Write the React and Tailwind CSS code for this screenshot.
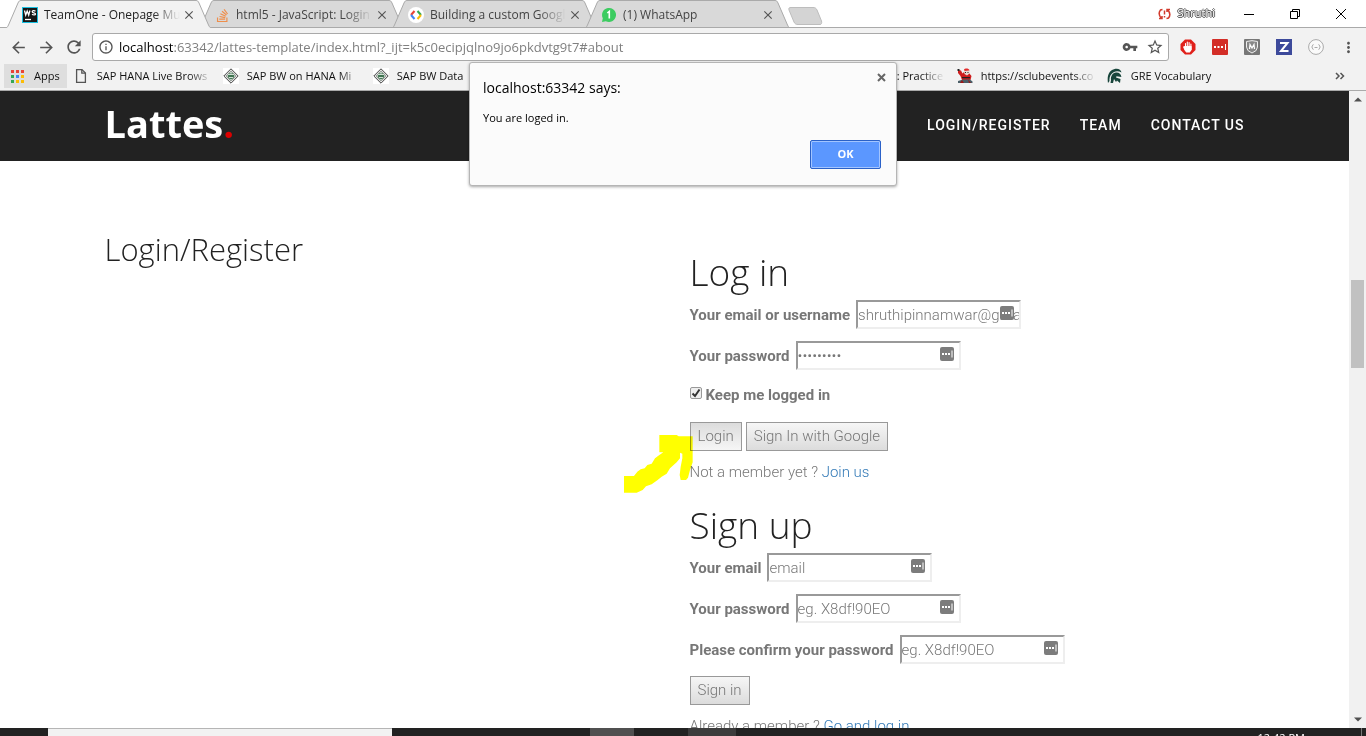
import React from "react";
import {
  MdArrowBack, MdArrowForward, MdRefresh, MdInfoOutline, MdVpnKey,
  MdStarBorder, MdMoreVert, MdClose,
} from "react-icons/md";
import { FaStackOverflow } from "react-icons/fa";

const UI = "font-['Open_Sans','Noto_Sans',sans-serif]";

function WebStormIcon() {
  return (
    <svg width="16" height="16" viewBox="0 0 16 16" aria-hidden="true">
      <rect width="16" height="16" fill="#19bfe0" />
      <rect x="1" y="1" width="14" height="14" fill="#161616" />
      <path d="M2.500 3.500l1.200 4.500 1.500-4 1.500 4 1.200-4.500M13.500 4.200c-1.200-.9-3.300-.7-3.300.6 0 1.300 3.300.7 3.300 2.100 0 1.300-2.300 1.300-3.500.4" fill="none" stroke="#fff" strokeWidth="1.300" />
      <path d="M3 12.500h6" stroke="#fff" strokeWidth="1.300" />
    </svg>
  );
}

function DevelopersIcon() {
  return (
    <svg width="16" height="16" viewBox="0 0 16 16" fill="none" strokeWidth="2" aria-hidden="true">
      <circle cx="8" cy="8" r="8" fill="#fff" />
      <path d="M6.500 4L3 8" stroke="#ea4335" />
      <path d="M3 8l3.500 4" stroke="#4285f4" />
      <path d="M9.500 4L13 8" stroke="#34a853" />
      <path d="M13 8l-3.500 4" stroke="#fbbc05" />
    </svg>
  );
}

function WhatsAppIcon() {
  return (
    <svg width="16" height="16" viewBox="0 0 16 16" aria-hidden="true">
      <path d="M1 15l.8-3.800A7 7 0 1 1 4.800 14.200z" fill="#3dcc61" />
      <path d="M6.300 6l2-1.600V11.500" fill="none" stroke="#fff" strokeWidth="1.600" />
    </svg>
  );
}

function DiamondIcon() {
  return (
    <svg width="16" height="16" viewBox="0 0 16 16" aria-hidden="true">
      <rect width="16" height="16" fill="#fff" />
      <path d="M8 .8L15.200 8 8 15.200.8 8z" fill="#f4f4f4" stroke="#444" />
      <path d="M8 2.800L13.200 8 8 13.200 2.800 8z" fill="#b5c9ba" stroke="#777" strokeWidth=".7" />
      <circle cx="8" cy="8" r="3" fill="#3f7350" />
      <path d="M5 6.500h6M6 9.500h4M8 4.500v2" stroke="#dfeae2" strokeWidth=".9" />
    </svg>
  );
}

function SantaIcon() {
  return (
    <svg width="16" height="16" viewBox="0 0 16 16" aria-hidden="true">
      <path d="M1 2l3 .5 1.500 3L7 4l5 1 2.500 3-1 4H5L3.500 8 1 5z" fill="#cf1d1d" />
      <path d="M7 1.500C8 0 12 0 12.500 2.500l-5 .5z" fill="#e22b2b" />
      <path d="M7 3h5.500v2.500L10 7.500 7.500 6z" fill="#e8d8d0" />
      <path d="M8 4h1v1H8zM10.500 4h1v1h-1zM5 9h8v1.300H5zM.5 1h2v2h-2z" fill="#222" />
      <path d="M1 13l5-1.500h7l2.500 2V15H1z" fill="#4b5f68" />
      <path d="M5 12l-2 3h4zM11 11.500l1 3.500h2z" fill="#9d1717" />
    </svg>
  );
}

function SpartanIcon() {
  return (
    <svg width="16" height="16" viewBox="0 0 16 16" aria-hidden="true">
      <path d="M1 15C-.2 8 2 2.500 7 1.200 11 0 14 1.600 14.500 4.500 12 3 9.500 2.800 7 4 3.500 5.700 2 9.500 2.500 13z" fill="#18453b" />
      <path d="M4 12C3.500 8.500 5.500 5 9 4.600c3-.3 5 1.400 5.400 4.400L9.500 8.200 9 9.500l4.500 1.500-.5 4-3-2.500-1 1.500L7 11l-1 4H3.500z" fill="#18453b" />
    </svg>
  );
}

function FileIcon() {
  return (
    <svg width="16" height="16" viewBox="0 0 16 16" fill="none" stroke="#555" strokeWidth="1.300" aria-hidden="true">
      <path d="M3.600 1.600h5.400l3.400 3.400v9.400H3.600z" />
      <path d="M8.800 1.800v3.400h3.500" />
    </svg>
  );
}

function AppsIcon() {
  const dots = ["#ea4335", "#ea4335", "#ea4335", "#34a853", "#4285f4", "#fbbc05", "#34a853", "#fbbc05", "#fbbc05"];
  return (
    <svg width="13" height="13" viewBox="0 0 13 13" aria-hidden="true">
      {dots.map((c, i) => <rect key={i} x={(i % 3) * 5} y={Math.floor(i / 3) * 5} width="3" height="3" fill={c} />)}
    </svg>
  );
}

function Tab({ icon, title, active }) {
  return (
    <div className={`relative -mr-[14px] flex h-7 w-[207px] items-center pt-[2px] pr-3.5 pl-[17px] ${active ? "z-10" : ""}`}>
      <svg className="absolute inset-0 h-full w-full" viewBox="0 0 207 28" preserveAspectRatio="none" aria-hidden="true">
        <path d="M0 28C2 28 2.500 27 3.500 25L13 3C14 1 14.500.5 16 .5H191C192.500.5 193 1 194 3L203.500 25C204.500 27 205 28 207 28" fill={active ? "#f2f2f2" : "#d9d9d9"} stroke="#aaa" />
        {!active && <path d="M0 27.500H207" stroke="#aaa" />}
      </svg>
      <button className="relative flex min-w-0 flex-1 items-center gap-1.5 text-left">
        <span className="shrink-0">{icon}</span>
        <span className={`w-[136px] overflow-hidden text-xs whitespace-nowrap [mask-image:linear-gradient(to_right,#000_80%,transparent)] ${active ? "text-[#222]" : "text-[#444]"}`}>{title}</span>
      </button>
      <button aria-label="Close tab" className="relative mr-[2px] text-[#555]"><MdClose size={14} /></button>
    </div>
  );
}

function Bookmark({ icon, children }) {
  return (
    <a href="#" className="flex w-[150px] shrink-0 items-center gap-2">
      <span className="shrink-0">{icon}</span>
      <span className="w-[115px] overflow-hidden whitespace-nowrap [mask-image:linear-gradient(to_right,#000_80%,transparent)]">{children}</span>
    </a>
  );
}

function FillIcon() {
  return (
    <svg className="absolute top-[6px] right-[7px]" width="14" height="14" viewBox="0 0 14 14" aria-hidden="true">
      <rect width="14" height="14" rx="2" fill="#7c7c7c" />
      <path d="M2 6h2v2H2zM5 6h2v2H5zM8 6h2v2H8zM11.500 3.500h1v7h-1z" fill="#fff" />
    </svg>
  );
}

function Field({ id, label, ...props }) {
  return (
    <p className="mb-3 flex items-center gap-1.5">
      <label htmlFor={id} className="font-bold">{label}</label>
      <span className="relative flex">
        <input id={id} className="h-[29px] w-[165px] border-2 border-t-[#999] border-r-[#eee] border-b-[#eee] border-l-[#999] bg-white text-[#777] placeholder:text-[#777] outline-none" {...props} />
        <FillIcon />
      </span>
    </p>
  );
}

const BTN = "h-[29px] border border-[#999] px-[7px] pb-px leading-6 from-[#f6f6f6] to-[#dcdcdc]";

function Heading({ children }) {
  return <h1 className="mb-2 font-['Open_Sans',sans-serif] text-[37px] leading-[40px] font-light text-[#222]">{children}</h1>;
}

function AlertDialog() {
  return (
    <div role="dialog" aria-label="localhost:63342 says:" className="absolute top-[62px] left-1/2 z-30 flex h-[124px] w-[428px] -translate-x-1/2 flex-col rounded-[3px] border border-[#b5b5b5] bg-[#fbfbfb] pt-[14px] pr-[15px] pl-[13px] text-black shadow-[0_1px_3px_rgba(0,0,0,0.35)]">
      <button aria-label="Close" className="absolute top-[10px] right-[10px]">
        <svg width="9" height="9" viewBox="0 0 9 9" fill="none" stroke="#666" strokeWidth="2"><path d="M1 1l7 7M8 1L1 8" /></svg>
      </button>
      <h2 className="text-[14px] leading-[22px]">localhost:63342 says:</h2>
      <p className="mt-[11px] text-[11px] leading-4">You are loged in.</p>
      <button className="mt-[14px] h-[29px] w-[71px] self-end rounded-[2px] border border-[#2a61c8] bg-[#5b97ff] text-[11px] font-bold text-white shadow-[inset_0_0_0_1px_#a3c5ff]">OK</button>
    </div>
  );
}

function Browser() {
  return (
    <header className="shrink-0">
      <div className="flex h-7 items-stretch border-b border-[#aaa] bg-white pr-[2px] pl-[5px]">
        <div className="flex">
          <Tab active icon={<WebStormIcon />} title="TeamOne - Onepage Mu" />
          <Tab icon={<FaStackOverflow size={15} color="#ef8e4b" />} title="html5 - JavaScript: Login" />
          <Tab icon={<DevelopersIcon />} title="Building a custom Googl" />
          <Tab icon={<WhatsAppIcon />} title="(1) WhatsApp" />
        </div>
        <button aria-label="New tab" className="ml-[10px]">
          <svg width="37" height="28" viewBox="0 0 37 28" aria-hidden="true">
            <path d="M4 7.500H26C28 7.500 29 8 30 10L34.500 21C35 23 34.500 24.500 33 24.500H11C9 24.500 8 24 7 22L2 10C1.500 8 2 7.500 4 7.500z" fill="#d4d4d4" stroke="#bdbdbd" />
          </svg>
        </button>
        <div className="flex-1" />
        <button className="mr-[11px] flex items-center gap-[7px]">
          <svg width="13" height="12" viewBox="0 0 13 12" fill="none" stroke="#d23a2c" strokeWidth="1.500" aria-hidden="true">
            <path d="M4.500 1.500L2.500 2C.5 4.500.8 7.500 3.500 10.500M1 10.500h3V8M8.500 10.500l2-.5c2-2.500 1.700-5.500-1-8.500M12 1.500H9V4M6.500 2.500v4M6.500 8v1.500" />
          </svg>
          <span className="text-[11px] text-white [text-shadow:1px_0_#555,-1px_0_#555,0_1px_#555,0_-1px_#555]">Shruthi</span>
        </button>
        <button aria-label="Minimize" className="flex w-[46px] items-center justify-center">
          <svg width="10" height="10" viewBox="0 0 10 10" stroke="#000"><path d="M0 5.500h10" /></svg>
        </button>
        <button aria-label="Restore" className="flex w-[46px] items-center justify-center">
          <svg width="10" height="10" viewBox="0 0 10 10" fill="none" stroke="#000"><path d="M.5 2.500h7v7h-7zM2.500 2.500v-2h7v7h-2" /></svg>
        </button>
        <button aria-label="Close window" className="flex w-[46px] items-center justify-center">
          <svg width="10" height="10" viewBox="0 0 10 10" stroke="#000"><path d="M0 0l10 10M10 0L0 10" /></svg>
        </button>
      </div>

      <div className="flex h-[38px] items-center bg-[#f2f2f2] pr-[2px] pl-1 text-[#555]">
        <button aria-label="Back" className="flex w-7 justify-center"><MdArrowBack size={19} /></button>
        <button aria-label="Forward" className="flex w-7 justify-center"><MdArrowForward size={19} /></button>
        <button aria-label="Reload" className="flex w-7 justify-center"><MdRefresh size={20} /></button>
        <form className="relative ml-1 flex h-7 flex-1 items-center rounded-[3px] border border-[#a9a9a9] bg-white pr-1 pl-[5px]">
          <MdInfoOutline size={16} />
          <p className="ml-[5px] flex-1 text-[13px] leading-5 whitespace-nowrap text-[#808080]">
            <span className="text-black">localhost</span>:63342/lattes-template/index.html?_ijt=k5c0ecipjqlno9jo6pkdvtg9t7#about
          </p>
          <MdVpnKey size={16} className="mr-2" />
          <MdStarBorder size={18} />
        </form>
        <div className="ml-[3px] flex [&>button]:flex [&>button]:w-8 [&>button]:justify-center">
          <button aria-label="AdBlock">
            <svg width="16" height="16" viewBox="0 0 16 16"><path d="M5 .5h6l4.500 4.500v6L11 15.500H5L.5 11V5z" fill="#e0201b" /><path d="M5.500 8V4.500M7.300 7.500V3M9.100 7.500V3.500M10.900 9V5M5 7.500l-1.300.5 1.300 3 1.500 2h3l1.700-2.500V7.500z" stroke="#fff" strokeWidth="1.100" fill="#fff" strokeLinecap="round" /></svg>
          </button>
          <button aria-label="LastPass">
            <svg width="16" height="16" viewBox="0 0 16 16"><rect width="16" height="16" rx="1" fill="#d32d27" /><path d="M2 7h2v2H2zM5.500 7h2v2h-2zM9 7h2v2H9zM13 5h1v6h-1z" fill="#fff" /></svg>
          </button>
          <button aria-label="Shield">
            <svg width="16" height="16" viewBox="0 0 16 16"><rect width="16" height="16" rx="1" fill="#777" /><path d="M2.500 2.500Q8 .8 13.500 2.500V8q0 4-5.500 6-5.500-2-5.500-6z" fill="#888" stroke="#eee" /><path d="M5.500 10L6 5.500l2 3.500 2-3.500.5 4.500" fill="none" stroke="#fff" strokeWidth="1.200" /></svg>
          </button>
          <button aria-label="Zotero">
            <svg width="16" height="16" viewBox="0 0 16 16"><rect width="16" height="16" fill="#3d4a9b" /><path d="M4 4h7.500L5 12h7.500" fill="none" stroke="#fff" strokeWidth="2" /></svg>
          </button>
          <button aria-label="JSON viewer">
            <svg width="16" height="16" viewBox="0 0 16 16" fill="none" stroke="#aaa"><circle cx="8" cy="8" r="7.400" fill="#fafafa" /><path d="M5.500 5.500Q4.500 5.500 4.500 7L3.700 8l.8 1q0 1.500 1 1.500M10.500 5.500q1 0 1 1.500l.8 1-.8 1q0 1.500-1 1.500M6.500 8.500h3" /></svg>
          </button>
          <button aria-label="Menu"><MdMoreVert size={17} /></button>
        </div>
      </div>

      <nav aria-label="Bookmarks" className="flex h-[25px] items-center border-b border-[#aaa] bg-[#f2f2f2] pr-[21px] pb-1 pl-1 text-[11px] whitespace-nowrap text-[#111]">
        <a href="#" className="mr-[6px] flex h-6 items-center gap-[10px] bg-[#dedede] px-[7px]"><AppsIcon />Apps</a>
        <Bookmark icon={<FileIcon />}>SAP HANA Live Brows</Bookmark>
        <Bookmark icon={<DiamondIcon />}>SAP BW on HANA Mi</Bookmark>
        <Bookmark icon={<DiamondIcon />}>SAP BW Data</Bookmark>
        <div className="w-[374px] shrink-0" />
        <a href="#" className="mr-3 w-[48px] shrink-0 overflow-hidden [mask-image:linear-gradient(to_right,#000_50%,transparent)]">: Practice</a>
        <Bookmark icon={<SantaIcon />}>https://sclubevents.co</Bookmark>
        <Bookmark icon={<SpartanIcon />}>GRE Vocabulary</Bookmark>
        <button aria-label="More bookmarks" className="ml-auto">
          <svg width="10" height="8" viewBox="0 0 10 8" fill="none" stroke="#555" strokeWidth="1.500"><path d="M1 1l3 3-3 3M5.500 1l3 3-3 3" /></svg>
        </button>
      </nav>
    </header>
  );
}

function LoginArrow() {
  return (
    <svg className="pointer-events-none absolute top-[183px] -left-[66px] mix-blend-multiply" width="70" height="58" viewBox="42 180 210 174" aria-hidden="true">
      <path d="M42 303H72L82 290 92 283 104 280 112 270 125 266 135 250 148 240 160 232H148V180H200L206 184H248V262L240 285 234 308 228 315H212L209 300 212 275 217 250V236L210 233V250L200 262 180 280 170 296 155 305 142 316 125 328 108 334 98 345 80 353H42z" fill="#ff0" />
    </svg>
  );
}

export default function App() {
  return (
    <div className={`relative flex h-screen flex-col overflow-hidden bg-white ${UI}`}>
      <Browser />
      <AlertDialog />
      <div className="flex min-h-0 flex-1">
        <main className="min-w-0 flex-1 overflow-hidden font-['Roboto',sans-serif] text-[15px] leading-[26px] font-light text-[#777]">
          <div className="bg-[#222]">
            <div className="mx-auto flex h-[70px] max-w-[1170px] items-center justify-between px-[15px] pb-[2px] text-white">
              <a href="#" className="pb-1 font-['Open_Sans',sans-serif] text-[38px] leading-[48px] font-bold">Lattes<span className="text-[#d00]">.</span></a>
              <nav className="flex gap-[29px] text-[14px] leading-5 font-medium tracking-[1px]">
                <a href="#">LOGIN/REGISTER</a>
                <a href="#">TEAM</a>
                <a href="#">CONTACT US</a>
              </nav>
            </div>
          </div>
          <section className="mx-auto grid max-w-[1170px] grid-cols-2 pt-[70px]">
            <div className="px-[15px]">
              <h2 className="font-['Open_Sans',sans-serif] text-[31px] leading-9 font-light text-[#222]">Login/Register</h2>
            </div>
            <div className="px-[15px] pt-[21px]">
              <form className="relative">
                <Heading>Log in</Heading>
                <Field id="username" label="Your email or username" type="text" defaultValue="shruthipinnamwar@gmail.com" />
                <Field id="password" label="Your password" type="password" defaultValue="lattes123" />
                <p className="mb-[14px] flex items-center gap-1">
                  <span className="relative mb-1 flex">
                    <input id="keep" type="checkbox" defaultChecked className="h-3 w-3 appearance-none rounded-[2px] border border-[#999] bg-[#eee]" />
                    <svg className="pointer-events-none absolute inset-0" width="12" height="12" viewBox="0 0 12 12" fill="none" stroke="#333" strokeWidth="2"><path d="M2.500 6.500L5 9l4.500-6.500" /></svg>
                  </span>
                  <label htmlFor="keep" className="font-bold">Keep me logged in</label>
                </p>
                <p className="mb-2 flex gap-1">
                  <button type="button" className={`${BTN} bg-linear-to-t`}>Login</button>
                  <button type="button" className={`${BTN} bg-linear-to-b`}>Sign In with Google</button>
                </p>
                <p>Not a member yet ? <a href="#" className="text-[#337ab7]">Join us</a></p>
                <LoginArrow />
              </form>
              <form className="mt-5">
                <Heading>Sign up</Heading>
                <Field id="email" label="Your email" type="email" placeholder="email" />
                <Field id="new-password" label="Your password" type="password" placeholder="eg. X8df!90EO" />
                <Field id="confirm" label="Please confirm your password" type="password" placeholder="eg. X8df!90EO" />
                <p className="mb-2 flex"><button type="button" className={`${BTN} bg-linear-to-b`}>Sign in</button></p>
                <p>Already a member ? <a href="#" className="text-[#337ab7]">Go and log in</a></p>
              </form>
            </div>
          </section>
        </main>
        <div className="flex w-[17px] shrink-0 flex-col items-center bg-[#f1f1f1] py-[6px]" aria-hidden="true">
          <svg width="8" height="5" viewBox="0 0 8 5" fill="#505050"><path d="M0 4.500L4 .5l4 4z" /></svg>
          <div className="mt-[178px] h-[88px] w-[13px] bg-[#c1c1c1]" />
          <svg className="mt-auto" width="8" height="5" viewBox="0 0 8 5" fill="#505050"><path d="M0 .5l4 4 4-4z" /></svg>
        </div>
      </div>
      <footer className="flex h-2 shrink-0 overflow-hidden bg-[#222] pr-1">
        <div className="ml-12 w-[344px] border-t border-[#b5b5b5] bg-[#f2f2f2]" />
        <div className="ml-[198px] w-11 bg-[#505050]" />
        <div className="ml-[54px] w-12 bg-[#3c3c3c]" />
        <time className="ml-auto pt-[2px] pr-14 text-[11px] leading-4 text-white">12:42 PM</time>
        <div className="w-px bg-[#777]" />
      </footer>
    </div>
  );
}
